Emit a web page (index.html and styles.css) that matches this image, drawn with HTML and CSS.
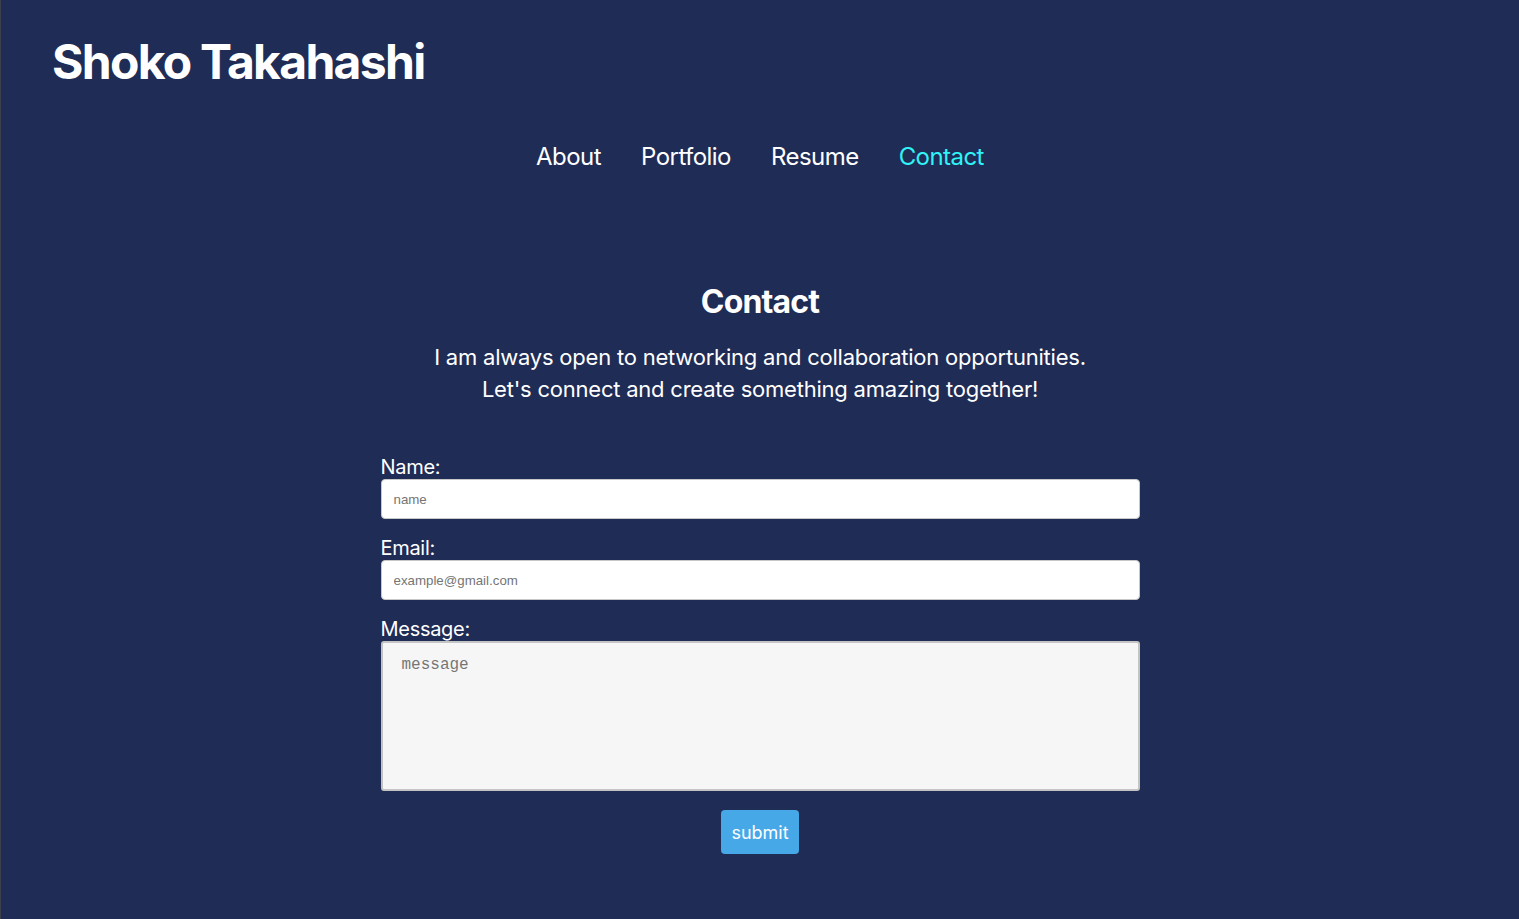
FILE: index.html
```html
<!DOCTYPE html>
<html lang="en">
<head>
<meta charset="utf-8">
<title>Shoko Takahashi</title>
<link rel="stylesheet" href="styles.css">
</head>
<body>
<header class="site-header">
  <h1 class="site-title">Shoko Takahashi</h1>
  <nav class="site-nav">
    <a href="#" class="nav-link">About</a>
    <a href="#" class="nav-link">Portfolio</a>
    <a href="#" class="nav-link">Resume</a>
    <a href="#" class="nav-link active">Contact</a>
  </nav>
</header>
<main class="contact">
  <h2 class="contact-title">Contact</h2>
  <p class="contact-intro">I am always open to networking and collaboration opportunities.<br>Let's connect and create something amazing together!</p>
  <form class="contact-form">
    <label class="field-label" for="name">Name:</label>
    <input class="field-input" id="name" type="text" placeholder="name">
    <label class="field-label" for="email">Email:</label>
    <input class="field-input" id="email" type="email" placeholder="example@gmail.com">
    <label class="field-label" for="message">Message:</label>
    <textarea class="field-textarea" id="message" placeholder="message"></textarea>
    <button class="submit-btn" type="button">submit</button>
  </form>
</main>
</body>
</html>
```

FILE: styles.css
```css
html, body {
  margin: 0;
  padding: 0;
}
body {
  background: #1f2c55;
  min-height: 919px;
  font-family: Inter, "Noto Sans", sans-serif;
  color: #ffffff;
  border-left: 1px solid #3a3f4a;
  box-sizing: border-box;
}
.site-header {
  padding: 33px 0 0 51px;
}
.site-title {
  margin: 0;
  font-size: 48px;
  font-weight: 700;
  line-height: 58px;
  letter-spacing: -1.7px;
}
.site-nav {
  display: flex;
  justify-content: center;
  gap: 40px;
  margin-top: 51px;
  padding-right: 51px;
}
.nav-link {
  color: #ffffff;
  text-decoration: none;
  font-size: 24px;
  line-height: 30px;
  letter-spacing: -0.55px;
}
.nav-link.active {
  color: #2ff3f5;
}
.contact {
  display: flex;
  flex-direction: column;
  align-items: center;
  padding-top: 110px;
}
.contact-title {
  margin: 0;
  font-size: 32px;
  font-weight: 700;
  line-height: 40px;
  letter-spacing: -0.85px;
}
.contact-intro {
  margin: 19px 0 0;
  font-size: 22px;
  line-height: 32px;
  text-align: center;
  letter-spacing: -0.22px;
}
.contact-form {
  display: flex;
  flex-direction: column;
  width: 759px;
  margin-top: 50px;
}
.field-label {
  font-size: 20px;
  line-height: 24px;
  letter-spacing: -0.3px;
}
.field-input {
  box-sizing: border-box;
  height: 40px;
  margin: 0 0 17px;
  padding: 0 12px;
  border: 1px solid #c8c8c8;
  border-radius: 4px;
  background: #ffffff;
  font-family: "Liberation Sans", Arial, sans-serif;
  font-size: 13.3px;
  color: #333;
}
.field-input::placeholder {
  color: #757575;
}
.field-textarea {
  box-sizing: border-box;
  height: 150px;
  margin: 0;
  padding: 13px 19px;
  border: 2px solid #c4c4c4;
  border-radius: 3px;
  background: #f6f6f6;
  font-family: "Liberation Mono", "Courier New", monospace;
  font-size: 16px;
  resize: none;
}
.field-textarea::placeholder {
  color: #757575;
}
.submit-btn {
  align-self: center;
  margin-top: 19px;
  width: 78px;
  height: 44px;
  border: none;
  border-radius: 4px;
  background: #47a8e8;
  color: #ffffff;
  font-family: Inter, "Noto Sans", sans-serif;
  font-size: 18px;
  padding: 0;
}
```
